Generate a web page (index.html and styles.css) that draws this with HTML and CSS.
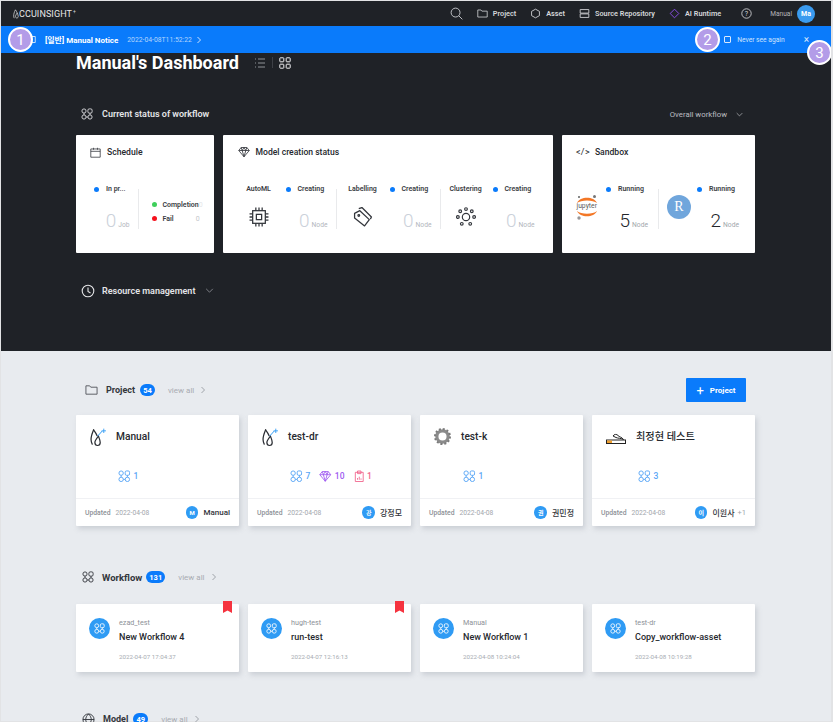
FILE: index.html
```html
<!DOCTYPE html>
<html lang="en">
<head>
<meta charset="utf-8">
<title>Manual's Dashboard</title>
<link rel="stylesheet" href="styles.css">
</head>
<body>
<svg class="sprite" width="0" height="0">
  <symbol id="flow" viewBox="0 0 16 16"><g fill="none" stroke="currentColor" stroke-width="1.200"><circle cx="4" cy="4" r="2.800"/><rect x="9.200" y="1.200" width="5.600" height="5.600" rx="1.700"/><circle cx="4" cy="12" r="2.800"/><circle cx="12" cy="12" r="2.800"/><path d="M4 6.800v2.400M12 6.800v2.400M6.800 12h2.400"/></g></symbol>
  <symbol id="gem" viewBox="0 0 16 16"><g fill="none" stroke="currentColor" stroke-width="1.100" stroke-linejoin="round"><path d="M4.200 2h7.600L15 6l-7 8.400L1 6z"/><path d="M1 6h14M4.200 2 5.600 6 8 14.400 10.400 6 11.800 2M5.600 6 8 2l2.400 4"/></g></symbol>
  <symbol id="drop" viewBox="0 0 18 20"><g fill="none" stroke-linecap="round"><path d="M4 1.500C2.500 5 1 8.500 1.200 12.500c.1 1.800.5 3.500 1.300 5" stroke="#2a2d33" stroke-width="1.400"/><path d="M9.500 8.500c-2 2.500-4 4.800-4 7.200 0 2 1.400 3.300 3 3.300s3-1.300 3-3.300c0-2.400-1-4.700-2-7.200z" stroke="#2a2d33" stroke-width="1.400"/><path d="M4 1.500c1.500 2 3 4 4 6.500" stroke="#2a2d33" stroke-width="1.400"/><path d="M9 8 13.500 3" stroke="#2f9bf4" stroke-width="1.100"/><path d="M15.500 .5v4M13.500 2.500h4" stroke="#2f9bf4" stroke-width="1"/></g></symbol>
  <symbol id="chev" viewBox="0 0 8 8"><path d="M2.500 1 5.500 4 2.500 7" fill="none" stroke="currentColor" stroke-width="1"/></symbol>
  <symbol id="chevd" viewBox="0 0 10 6"><path d="M1 1 5 5 9 1" fill="none" stroke="currentColor" stroke-width="1"/></symbol>
  <symbol id="folder" viewBox="0 0 14 12"><path d="M1 10.500V1.500h4l1.200 1.500H13v7.500z" fill="none" stroke="currentColor" stroke-width="1"/></symbol>
</svg>

<div class="page">
  <header class="topbar">
    <div class="logo">
      <svg class="logo-mark" viewBox="0 0 10 14"><path d="M3.500 1C2 4 .8 7 1 10c0 1 .3 2 .8 3M6 5.500C4.800 7.500 3.500 9 3.500 10.500c0 1.300.9 2.200 2 2.200s2-.9 2-2.200c0-1.500-.7-3-1.500-5zM3.500 1C4.500 2.500 5.500 4 6 5.500" fill="none" stroke="#e8e8e8" stroke-width="1"/></svg>
      <span class="logo-text">CCUINSIGHT</span><span class="logo-sup">+</span>
    </div>
    <nav class="nav">
      <svg class="nav-search" viewBox="0 0 14 14"><circle cx="6" cy="6" r="4.800" fill="none" stroke="currentColor" stroke-width="1"/><path d="M9.500 9.500 13.300 13.300" stroke="currentColor" stroke-width="1"/></svg>
      <a class="nav-item"><svg class="nav-ico" viewBox="0 0 14 12"><use href="#folder"/></svg>Project</a>
      <a class="nav-item"><svg class="nav-ico" viewBox="0 0 14 14"><path d="M7 1.500 12 4.300v5.400L7 12.500 2 9.700V4.300z" fill="none" stroke="currentColor" stroke-width="1.100"/></svg>Asset</a>
      <a class="nav-item"><svg class="nav-ico" viewBox="0 0 14 14"><path d="M1.500 2h11v4.500h-11zM1.500 7.500h11V12h-11z" fill="none" stroke="currentColor" stroke-width="1.100"/></svg>Source Repository</a>
      <a class="nav-item"><svg class="nav-ico" viewBox="0 0 14 14"><path d="M7 1.500 12.500 7 7 12.500 1.500 7z" fill="none" stroke="#8a4fe8" stroke-width="1.200"/></svg>AI Runtime</a>
      <svg class="nav-help" viewBox="0 0 14 14"><circle cx="7" cy="7" r="6" fill="none" stroke="currentColor" stroke-width="1.100"/><text x="7" y="10" text-anchor="middle" class="help-q">?</text></svg>
      <span class="nav-user">Manual</span>
      <span class="nav-avatar">Ma</span>
    </nav>
  </header>

  <div class="notice">
    <svg class="notice-ico" viewBox="0 0 8 10"><path d="M1 1h6v8H1z" fill="none" stroke="#fff" stroke-width="1"/></svg>
    <span class="notice-title">[일반] Manual Notice</span>
    <span class="notice-date">2022-04-08T11:52:22</span>
    <svg class="notice-chev"><use href="#chev"/></svg>
    <span class="notice-spacer"></span>
    <span class="notice-check"></span>
    <span class="notice-never">Never see again</span>
    <span class="notice-close">×</span>
  </div>

  <section class="dark">
    <div class="title-row">
      <h1 class="title">Manual's Dashboard</h1>
      <svg class="view-ico view-list" viewBox="0 0 12 12"><path d="M1 2h1M4 2h7M1 6h1M4 6h7M1 10h1M4 10h7" stroke="currentColor" stroke-width="1"/></svg>
      <span class="view-sep"></span>
      <svg class="view-ico view-grid" viewBox="0 0 12 12"><g fill="none" stroke="currentColor" stroke-width="1"><rect x=".8" y=".8" width="4" height="4" rx=".6"/><rect x="7.200" y=".8" width="4" height="4" rx=".6"/><rect x=".8" y="7.200" width="4" height="4" rx=".6"/><rect x="7.200" y="7.200" width="4" height="4" rx=".6"/></g></svg>
    </div>

    <div class="status-head">
      <svg class="head-ico"><use href="#flow"/></svg>
      <span class="head-text">Current status of workflow</span>
      <span class="overall">Overall workflow</span>
      <svg class="overall-chev"><use href="#chevd"/></svg>
    </div>

    <div class="status-cards">
      <article class="scard schedule">
        <h3 class="scard-head"><svg class="scard-ico" viewBox="0 0 14 14"><path d="M1 2.500h12v10.500H1zM1 5.500h12M4.500 1v2.500M9.500 1v2.500" fill="none" stroke="#33363c" stroke-width="1"/></svg>Schedule</h3>
        <div class="scard-body">
          <div class="sch-main">
            <div class="status"><i class="dot"></i><span>In pr...</span></div>
            <div class="count dim"><b>0</b><small>Job</small></div>
          </div>
          <div class="sch-side">
            <div class="side-row"><i class="dot green"></i><span>Completion</span><em>0</em></div>
            <div class="side-row"><i class="dot red"></i><span>Fail</span><em class="fail-n">0</em></div>
          </div>
        </div>
      </article>

      <article class="scard model">
        <h3 class="scard-head"><svg class="scard-ico gem-ico"><use href="#gem"/></svg>Model creation status</h3>
        <div class="scard-body">
          <div class="cell c-auto">
            <div class="cell-left"><span class="cell-name">AutoML</span>
              <svg class="cell-ico" viewBox="0.5 0.5 19 19"><g fill="none" stroke="#33363c" stroke-width="1.200"><rect x="4" y="4" width="12" height="12"/><rect x="7.500" y="7.500" width="5" height="5"/><path d="M7 1v3M10 1v3M13 1v3M7 16v3M10 16v3M13 16v3M1 7h3M1 10h3M1 13h3M16 7h3M16 10h3M16 13h3"/></g></svg></div>
            <div class="cell-right"><div class="status"><i class="dot"></i><span>Creating</span></div><div class="count dim"><b>0</b><small>Node</small></div></div>
          </div>
          <div class="cell c-label">
            <div class="cell-left"><span class="cell-name">Labelling</span>
              <svg class="cell-ico" viewBox="0.5 0.5 19 19"><g fill="none" stroke="#33363c" stroke-width="1.200" stroke-linejoin="round"><path d="M2 6.500 7 4l9 8.500-4.500 6L2 11z"/><path d="M6 2 9 1l9 9-1 2"/><circle cx="6" cy="8.500" r=".8"/></g></svg></div>
            <div class="cell-right"><div class="status"><i class="dot"></i><span>Creating</span></div><div class="count dim"><b>0</b><small>Node</small></div></div>
          </div>
          <div class="cell c-cluster">
            <div class="cell-left"><span class="cell-name">Clustering</span>
              <svg class="cell-ico" viewBox="0.5 0.5 19 19"><g fill="none" stroke="#33363c" stroke-width="1.100"><circle cx="10" cy="10" r="3.500"/><circle cx="10" cy="2.500" r="1.300"/><circle cx="4.500" cy="4.500" r="1.300"/><circle cx="15.500" cy="4.500" r="1.300"/><circle cx="2.300" cy="10" r="1.300"/><circle cx="17.700" cy="10" r="1.300"/><circle cx="6" cy="16.500" r="1.300"/><circle cx="14" cy="16.500" r="1.300"/></g></svg></div>
            <div class="cell-right"><div class="status"><i class="dot"></i><span>Creating</span></div><div class="count dim"><b>0</b><small>Node</small></div></div>
          </div>
        </div>
      </article>

      <article class="scard sandbox">
        <h3 class="scard-head"><span class="code-ico">&lt;/&gt;</span>Sandbox</h3>
        <div class="scard-body">
          <div class="sb-cell sb-j">
            <div class="jupyter">
              <svg viewBox="0 0 24 26"><path d="M2 9C5 2 19 2 22 9 18 5.500 6 5.500 2 9zM2 17c3 7 17 7 20 0-4 3.500-16 3.500-20 0z" fill="#f37726"/><circle cx="19.500" cy="2.500" r="1.500" fill="#767677"/><circle cx="4" cy="3" r="1" fill="#616262"/><circle cx="4" cy="24" r="1.700" fill="#989798"/></svg>
              <span class="jupyter-text">jupyter</span>
            </div>
            <div class="cell-right"><div class="status"><i class="dot"></i><span>Running</span></div><div class="count"><b>5</b><small>Node</small></div></div>
          </div>
          <div class="sb-cell sb-r">
            <span class="r-logo">R</span>
            <div class="cell-right"><div class="status"><i class="dot"></i><span>Running</span></div><div class="count"><b>2</b><small>Node</small></div></div>
          </div>
        </div>
      </article>
    </div>

    <div class="res-head">
      <svg class="res-ico" viewBox="0 0 14 14"><circle cx="7" cy="7" r="5.800" fill="none" stroke="currentColor" stroke-width="1.100"/><path d="M7 3.500V7.500L9.500 9" fill="none" stroke="currentColor" stroke-width="1.100"/></svg>
      <span class="head-text">Resource management</span>
      <svg class="res-chev"><use href="#chevd"/></svg>
    </div>
  </section>

  <section class="light">
    <div class="sec-head sec-project">
      <svg class="sec-ico"><use href="#folder"/></svg>
      <span class="sec-name">Project</span>
      <span class="pill">54</span>
      <span class="viewall">view all</span>
      <svg class="viewall-chev"><use href="#chev"/></svg>
      <span class="sec-spacer"></span>
      <button class="add-btn"><span class="plus">+</span>Project</button>
    </div>

    <div class="grid pgrid">
      <article class="pcard">
        <div class="pcard-main">
          <svg class="plogo plogo-drop"><use href="#drop"/></svg>
          <div class="pcontent">
            <h4 class="pname">Manual</h4>
            <div class="pstats"><svg class="stat-ico blue"><use href="#flow"/></svg><span class="blue">1</span></div>
          </div>
        </div>
        <div class="pfoot"><span class="upd">Updated</span><span class="upd-date">2022-04-08</span><span class="av">M</span><span class="owner">Manual</span></div>
      </article>
      <article class="pcard">
        <div class="pcard-main">
          <svg class="plogo plogo-drop"><use href="#drop"/></svg>
          <div class="pcontent">
            <h4 class="pname">test-dr</h4>
            <div class="pstats"><svg class="stat-ico blue"><use href="#flow"/></svg><span class="blue">7</span>
              <svg class="stat-ico purple stat-next"><use href="#gem"/></svg><span class="purple">10</span>
              <svg class="stat-clip pink stat-next" viewBox="0 0 12 14"><path d="M1.500 2.500h9v10.500h-9zM4 1h4v3H4zM4 11V9M6 11V7.500M8 11V9.500" fill="none" stroke="currentColor" stroke-width="1"/></svg><span class="pink">1</span></div>
          </div>
        </div>
        <div class="pfoot"><span class="upd">Updated</span><span class="upd-date">2022-04-08</span><span class="av">강</span><span class="owner">강정모</span></div>
      </article>
      <article class="pcard">
        <div class="pcard-main">
          <svg class="plogo plogo-gear" viewBox="0 0 18 18"><circle cx="9" cy="9" r="6" fill="none" stroke="#8b8b8b" stroke-width="3.400"/><circle cx="9" cy="9" r="8" fill="none" stroke="#7b7b7b" stroke-width="2" stroke-dasharray="2.200 1.990"/></svg>
          <div class="pcontent">
            <h4 class="pname">test-k</h4>
            <div class="pstats"><svg class="stat-ico blue"><use href="#flow"/></svg><span class="blue">1</span></div>
          </div>
        </div>
        <div class="pfoot"><span class="upd">Updated</span><span class="upd-date">2022-04-08</span><span class="av">권</span><span class="owner">권민정</span></div>
      </article>
      <article class="pcard">
        <div class="pcard-main">
          <svg class="plogo plogo-cig" viewBox="0 0 20 12"><path d="M7 3C8 1 11 1 12 2.500S16 4 17.500 6.500C15 5 12 5.500 10 4.500 9 4 8 3.500 7 3z" fill="none" stroke="#222" stroke-width="1"/><rect x=".5" y="7" width="19" height="3.500" fill="#fff" stroke="#222" stroke-width="1"/><rect x="1" y="7.500" width="5" height="2.500" fill="#f0a030"/></svg>
          <div class="pcontent">
            <h4 class="pname">최정현 테스트</h4>
            <div class="pstats"><svg class="stat-ico blue"><use href="#flow"/></svg><span class="blue">3</span></div>
          </div>
        </div>
        <div class="pfoot"><span class="upd">Updated</span><span class="upd-date">2022-04-08</span><span class="av">이</span><span class="owner">이원사</span><span class="more">+1</span></div>
      </article>
    </div>

    <div class="sec-head sec-workflow">
      <svg class="sec-ico"><use href="#flow"/></svg>
      <span class="sec-name">Workflow</span>
      <span class="pill">131</span>
      <span class="viewall">view all</span>
      <svg class="viewall-chev"><use href="#chev"/></svg>
    </div>

    <div class="grid wgrid">
      <article class="wcard">
        <span class="wc-ico"><svg><use href="#flow"/></svg></span>
        <div class="wc-text"><span class="wc-owner">ezad_test</span><h4 class="wc-name">New Workflow 4</h4><span class="wc-date">2022-04-07 17:04:37</span></div>
        <svg class="bookmark" viewBox="0 0 9 12"><path d="M0 0h9v12L4.500 9.500 0 12z"/></svg>
      </article>
      <article class="wcard">
        <span class="wc-ico"><svg><use href="#flow"/></svg></span>
        <div class="wc-text"><span class="wc-owner">hugh-test</span><h4 class="wc-name">run-test</h4><span class="wc-date">2022-04-07 12:16:13</span></div>
        <svg class="bookmark" viewBox="0 0 9 12"><path d="M0 0h9v12L4.500 9.500 0 12z"/></svg>
      </article>
      <article class="wcard">
        <span class="wc-ico"><svg><use href="#flow"/></svg></span>
        <div class="wc-text"><span class="wc-owner">Manual</span><h4 class="wc-name">New Workflow 1</h4><span class="wc-date">2022-04-08 10:24:04</span></div>
      </article>
      <article class="wcard">
        <span class="wc-ico"><svg><use href="#flow"/></svg></span>
        <div class="wc-text"><span class="wc-owner">test-dr</span><h4 class="wc-name">Copy_workflow-asset</h4><span class="wc-date">2022-04-08 10:19:28</span></div>
      </article>
    </div>

    <div class="sec-head sec-model">
      <svg class="sec-ico" viewBox="0 0 14 14"><g fill="none" stroke="currentColor" stroke-width="1"><circle cx="7" cy="7" r="6"/><path d="M1 7h12M7 1c-4 4-4 8 0 12M7 1c4 4 4 8 0 12"/></g></svg>
      <span class="sec-name">Model</span>
      <span class="pill">49</span>
      <span class="viewall">view all</span>
      <svg class="viewall-chev"><use href="#chev"/></svg>
    </div>
  </section>

  <span class="marker m1">1</span>
  <span class="marker m2">2</span>
  <span class="marker m3">3</span>
</div>
</body>
</html>
```

FILE: styles.css
```css
* { box-sizing: border-box; }
html, body { margin: 0; padding: 0; height: 722px; overflow: hidden; }
body { background: #e2e3e5; font-family: Roboto, "Noto Sans CJK KR", sans-serif; color: #26292e; }
.sprite { position: absolute; }
h1, h3, h4 { margin: 0; }

.page { position: relative; width: 830px; height: 721px; margin: 1px 0 0 1px; overflow: hidden; }

/* top bar */
.topbar { height: 25px; background: #1f2227; display: flex; align-items: center; color: #e6e7e9; }
.logo { display: flex; align-items: center; margin-left: 12px; }
.logo-mark { width: 7px; height: 10px; }
.logo-text { font-size: 9px; letter-spacing: .1px; color: #e8e8e8; margin-left: -1px; font-weight: 400; }
.logo-sup { font-size: 5px; color: #cfd6de; margin: -6px 0 0 1px; }
.nav { margin-left: auto; display: flex; align-items: center; margin-right: 16px; }
.nav-search { width: 13px; height: 13px; color: #c9cbcf; margin-right: 14px; }
.nav-item { display: flex; align-items: center; font-size: 7.300px; font-weight: 600; color: #d5d7da; margin-right: 14px; }
.nav-ico { width: 11px; height: 11px; margin-right: 5px; }
.nav-help { width: 11px; height: 11px; margin-left: 6px; color: #d5d7da; }
.help-q { font-size: 9px; fill: #d5d7da; }
.nav-user { margin-left: 18px; font-size: 6.600px; color: #b4b6ba; }
.nav-avatar { width: 18px; height: 18px; margin-left: 5px; border-radius: 50%; background: #3a9bef; color: #fff; font-size: 7px; font-weight: 700; display: flex; align-items: center; justify-content: center; }

/* notice */
.notice { height: 27px; background: #0a7bfb; display: flex; align-items: center; color: #fff; padding-left: 29px; }
.notice-ico { width: 6px; height: 9px; margin-right: 9px; }
.notice-title { font-size: 8px; font-weight: 700; }
.notice-date { font-size: 6.800px; color: #b5d5fc; margin-left: 9px; }
.notice-chev { width: 8px; height: 8px; color: #cfe3fd; margin-left: 3px; }
.notice-spacer { flex: 1; }
.notice-check { width: 7px; height: 7px; border: 1px solid #d8e8fd; border-radius: 1px; margin-right: 6px; }
.notice-never { font-size: 6.700px; color: #cfe3fd; }
.notice-close { font-size: 10px; color: #d8e8fd; margin: 0 22px 0 19px; }

/* dark section */
.dark { height: 298px; background: #1f2227; padding: 0 75px 0 75px; color: #fff; }
.title-row { display: flex; align-items: center; height: 18px; padding-top: 1px; }
.title { font-size: 18px; font-weight: 700; line-height: 18px; color: #fff; }
.view-ico { width: 12px; height: 12px; }
.view-list { margin-left: 15px; color: #8f9297; }
.view-sep { width: 1px; height: 11px; background: #3d4046; margin: 0 6px; }
.view-grid { color: #f0f0f2; }
.status-head { display: flex; align-items: center; margin-top: 34px; height: 18px; }
.head-ico { width: 12px; height: 12px; color: #dcdde0; margin-left: 5px; margin-right: 9px; }
.head-text { font-size: 9px; font-weight: 600; color: #e4e5e7; }
.overall { margin-left: auto; margin-right: 9px; font-size: 7.800px; color: #bcbec2; }
.overall-chev { width: 7px; height: 5px; color: #bcbec2; margin-right: 13px; }
.status-cards { display: grid; grid-template-columns: 137.500px 330.500px 193px; column-gap: 9px; margin-top: 12px; }
.scard { height: 117.500px; background: #fff; border-radius: 1px; color: #26292e; display: flex; flex-direction: column; }
.scard-head { display: flex; align-items: center; height: 12px; margin-top: 11px; font-size: 8.600px; font-weight: 500; line-height: 12px; }
.scard-ico { width: 11px; height: 11px; margin-right: 6px; }
.schedule .scard-head { padding-left: 14px; }
.model .scard-head { padding-left: 15px; }
.gem-ico { width: 12px; height: 12px; color: #33363c; }
.sandbox .scard-head { padding-left: 14px; }
.code-ico { font-size: 9px; margin-right: 5px; font-weight: 400; letter-spacing: .3px; }
.scard-body { display: flex; margin-top: 31px; height: 40px; }

.status { display: flex; align-items: center; height: 10px; margin-top: -5px; font-size: 7px; font-weight: 600; color: #3a3d43; white-space: nowrap; }
.dot { display: block; width: 5px; height: 5px; border-radius: 50%; background: #0a7bfb; margin-right: 7px; flex: none; }
.dot.green { background: #3fcf5b; }
.dot.red { background: #f5111d; }
.count { margin-top: auto; margin-bottom: -6px; display: flex; justify-content: flex-end; align-items: baseline; line-height: 20px; color: #23262b; }
.count b { font-size: 19px; font-weight: 300; }
.count small { font-size: 6.700px; margin-left: 2px; color: #a3a7ad; }
.count.dim b { color: #cbd1da; }
.count.dim small { color: #b3b7bd; }

.sch-main { width: 62.500px; padding-left: 18px; border-right: 1px solid #e9eaec; display: flex; flex-direction: column; padding-right: 8px; }
.sch-side { flex: 1; display: flex; flex-direction: column; padding-left: 13px; padding-top: 13px; gap: 9px; }
.side-row { display: flex; align-items: center; height: 5px; font-size: 7px; font-weight: 600; color: #3a3d43; }
.side-row .dot { margin-right: 6px; }
.side-row em { font-style: normal; font-weight: 400; color: #e3e5e8; }
.side-row .fail-n { margin-left: 22px; color: #c3c6cb; }

.cell { display: flex; height: 40px; }
.cell-left { width: 34px; display: flex; flex-direction: column; align-items: center; }
.cell-name { display: flex; align-items: center; font-size: 7px; font-weight: 600; color: #3a3d43; height: 10px; margin-top: -5px; white-space: nowrap; }
.cell-ico { width: 20px; height: 20px; margin-top: 13px; }
.cell-right { display: flex; flex-direction: column; width: 44px; }
.c-auto .cell-right, .c-label .cell-right, .c-cluster .cell-right { margin-left: 8px; }
.c-auto { margin-left: 19px; padding-right: 8px; }
.c-label { border-left: 1px solid #e9eaec; padding-left: 9px; padding-right: 8px; }
.c-cluster { border-left: 1px solid #e9eaec; padding-left: 8px; }
.model .status { padding-left: 2px; }

.sb-cell { display: flex; height: 40px; }
.sb-j { padding-left: 13px; padding-right: 10px; }
.sb-r { border-left: 1px solid #e9eaec; padding-left: 8px; }
.jupyter { position: relative; width: 24px; height: 26px; margin-top: 5px; }
.jupyter svg { width: 24px; height: 26px; display: block; }
.jupyter-text { position: absolute; left: 1.500px; top: 8px; font-size: 6.800px; line-height: 9px; color: #5b5b5b; }
.sb-j .cell-right { margin-left: 5px; width: 44px; }
.sb-j .status { padding-left: 2px; }
.sb-r .cell-right { margin-left: 3px; width: 45px; }
.sb-r .status { padding-left: 3px; }
.r-logo { width: 24px; height: 24px; margin-top: 6px; border-radius: 50%; background: #70a6dc; color: #fff; font-family: "Liberation Serif", serif; font-size: 14px; display: flex; align-items: center; justify-content: center; }

.res-head { display: flex; align-items: center; margin-top: 30px; height: 16px; }
.res-ico { width: 14px; height: 14px; margin-left: 5px; margin-right: 7px; color: #e4e5e7; }
.res-chev { width: 9px; height: 5px; color: #8f9297; margin-left: 10px; }

/* light section */
.light { height: 370px; background: #e8ebef; padding: 27px 75px 0 75px; }
.sec-head { display: flex; align-items: center; height: 24px; }
.sec-ico { width: 13px; height: 12px; margin-left: 9px; margin-right: 8px; color: #55585e; }
.sec-name { font-size: 9px; font-weight: 700; color: #33363c; }
.pill { height: 12px; min-width: 15px; padding: 0 3px; margin-left: 5px; border-radius: 6px; background: #0a7bfb; color: #fff; font-size: 7.500px; font-weight: 700; display: flex; align-items: center; justify-content: center; }
.viewall { margin-left: 13px; font-size: 8px; color: #a8acb2; }
.viewall-chev { width: 8px; height: 8px; color: #a0a4aa; margin-left: 5px; }
.sec-spacer { flex: 1; }
.add-btn { width: 60px; height: 24px; margin-right: 10px; border: 0; border-radius: 1px; background: #0a7bfb; color: #fff; font-family: inherit; font-size: 8px; font-weight: 700; display: flex; align-items: center; justify-content: center; padding: 0; }
.plus { font-size: 13px; font-weight: 400; margin-right: 6px; line-height: 1; }

.grid { display: grid; grid-template-columns: repeat(4, 163px); column-gap: 9px; }
.pgrid { margin-top: 13px; }
.pcard { height: 111px; background: #fff; border-radius: 1px; box-shadow: 2px 3px 5px rgba(150,155,165,.35); display: flex; flex-direction: column; }
.pcard-main { flex: 1; display: flex; padding: 13px 0 0 14px; }
.plogo { display: block; flex: none; }
.plogo-drop { width: 16px; height: 19px; }
.plogo-gear { width: 17px; height: 17px; }
.plogo-cig { width: 20px; height: 12px; margin-top: 5px; }
.pcontent { margin-left: 10px; }
.pname { font-size: 10.200px; font-weight: 500; line-height: 14px; margin-top: 2px; color: #26292e; }
.pstats { display: flex; align-items: center; margin: 25px 0 0 2px; font-size: 8.500px; font-weight: 500; height: 14px; }
.stat-ico { width: 12.500px; height: 12.500px; margin-right: 3px; }
.stat-clip { width: 10.500px; height: 12.500px; margin-right: 3px; }
.stat-next { margin-left: 9px; }
.blue { color: #5aa6f6; }
.purple { color: #a05bf0; }
.pink { color: #f0648c; }
.pfoot { height: 28px; border-top: 1px solid #f0f1f4; display: flex; align-items: center; padding: 0 9px; }
.upd { font-size: 6.800px; font-weight: 500; color: #8d9197; }
.upd-date { margin-left: 5px; font-size: 6.700px; color: #a2a6ac; }
.av { width: 12.500px; height: 12.500px; margin-left: auto; border-radius: 50%; background: #2f9bf4; color: #fff; font-size: 6px; font-weight: 700; display: flex; align-items: center; justify-content: center; }
.owner { margin-left: 5px; font-size: 8px; font-weight: 500; color: #33363c; }
.more { margin-left: 3px; font-size: 7.500px; color: #a2a6ac; }

.sec-workflow { margin-top: 39px; }
.sec-workflow .sec-ico { width: 12px; height: 12px; margin-left: 6px; margin-right: 8px; color: #33363c; }
.sec-workflow .sec-name { font-size: 9.500px; }
.sec-workflow .pill { min-width: 19px; margin-left: 4px; }
.wgrid { margin-top: 15px; }
.wcard { position: relative; height: 68px; background: #fff; border-radius: 1px; box-shadow: 2px 3px 5px rgba(150,155,165,.35); display: flex; padding: 14px 0 0 13px; }
.wc-ico { width: 21px; height: 21px; border-radius: 50%; background: #2f9bf4; color: #fff; display: flex; align-items: center; justify-content: center; flex: none; }
.wc-ico svg { width: 11px; height: 11px; }
.wc-text { margin-left: 9px; display: flex; flex-direction: column; align-items: flex-start; }
.wc-owner { font-size: 7.200px; line-height: 10px; color: #8d9197; }
.wc-name { font-size: 9px; font-weight: 500; line-height: 12px; color: #26292e; margin-top: 3px; }
.wc-date { font-size: 6.200px; line-height: 10px; color: #a8acb2; margin-top: 9px; }
.bookmark { position: absolute; top: -3px; right: 7px; width: 9px; height: 12px; fill: #f5333f; }
.sec-model { margin-top: 35px; }
.sec-model .sec-ico { width: 13px; height: 13px; margin-left: 6px; margin-right: 8px; color: #33363c; }

/* annotation markers */
.marker { position: absolute; width: 25px; height: 25px; border-radius: 50%; background: #b39ce8; border: 2px solid #fff; color: #fff; font-size: 15px; display: flex; align-items: center; justify-content: center; }
.m1 { left: 7px; top: 26px; }
.m2 { left: 694px; top: 26px; }
.m3 { left: 806px; top: 39px; }
```
